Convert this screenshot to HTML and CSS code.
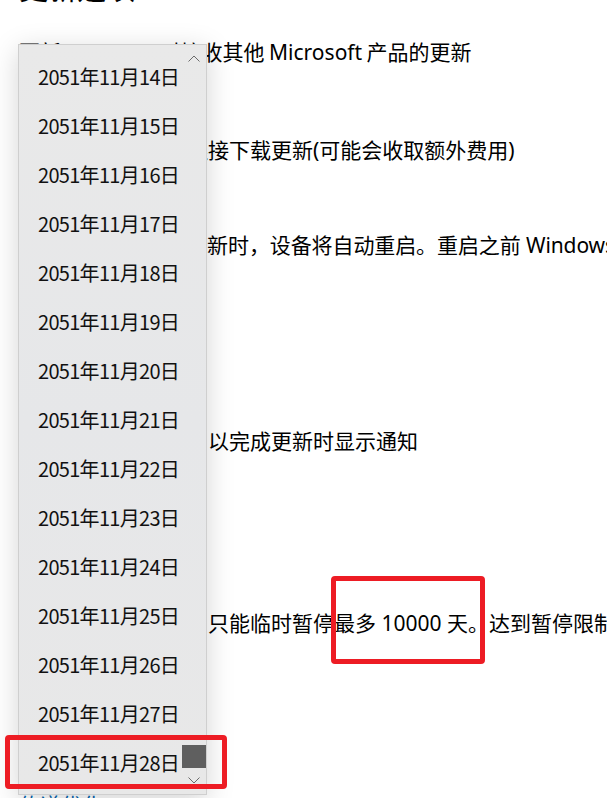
FILE: index.html
```html
<!DOCTYPE html>
<html lang="zh-CN">
<head>
<meta charset="utf-8">
<title>高级选项</title>
<link rel="stylesheet" href="styles.css">
</head>
<body>
<div class="page">
  <h2 class="heading">更新选项</h2>
  <p class="opt l1">更新 Windows 时接收其他 Microsoft 产品的更新</p>
  <p class="opt l2">通过按流量计费的连接下载更新(可能会收取额外费用)</p>
  <p class="opt l3">当需要重启以安装更新时，设备将自动重启。重启之前 Windows 将显示通知。</p>
  <p class="opt l4">当你的设备需要重启以完成更新时显示通知</p>
  <p class="opt l5">此设备暂停更新时，只能临时暂停最多 10000 天。达到暂停限制后，需要先获取新的更新。</p>
  <a class="link" href="#">传递优化</a>
</div>

<div class="dropdown">
  <svg class="chev chev-up" width="12" height="7" viewBox="0 0 12 7"><polyline points="0.5,6.5 6,1 11.5,6.5" fill="none" stroke="#6b6b6b" stroke-width="1"/></svg>
  <ul class="list">
    <li class="item">2051年11月14日</li>
    <li class="item">2051年11月15日</li>
    <li class="item">2051年11月16日</li>
    <li class="item">2051年11月17日</li>
    <li class="item">2051年11月18日</li>
    <li class="item">2051年11月19日</li>
    <li class="item">2051年11月20日</li>
    <li class="item">2051年11月21日</li>
    <li class="item">2051年11月22日</li>
    <li class="item">2051年11月23日</li>
    <li class="item">2051年11月24日</li>
    <li class="item">2051年11月25日</li>
    <li class="item">2051年11月26日</li>
    <li class="item">2051年11月27日</li>
    <li class="item">2051年11月28日</li>
  </ul>
  <svg class="chev chev-down" width="12" height="7" viewBox="0 0 12 7"><polyline points="0.5,0.5 6,6 11.5,0.5" fill="none" stroke="#6b6b6b" stroke-width="1"/></svg>
  <div class="thumb"></div>
</div>

<div class="mark mark-item"></div>
<div class="mark mark-text"></div>
</body>
</html>
```

FILE: styles.css
```css
html, body {
  margin: 0;
  padding: 0;
  background: #ffffff;
  overflow: hidden;
}
body {
  font-family: "Noto Sans", "Noto Sans CJK SC", sans-serif;
  color: #000000;
  position: relative;
  width: 607px;
  height: 798px;
}
.page {
  padding-left: 19px;
  white-space: nowrap;
}
.heading {
  font-family: "Noto Sans", "Noto Sans CJK SC", sans-serif;
  font-size: 29px;
  font-weight: 400;
  line-height: 36px;
  margin: -29px 0 0;
}
.opt {
  font-size: 21px;
  line-height: 28px;
  margin: 0;
}
.l1 { margin-top: 31px; word-spacing: -1px; }
.l2 { margin-top: 70px; }
.l3 { margin-top: 67px; letter-spacing: -0.1px; }
.l4 { margin-top: 168px; }
.l5 { margin-top: 154px; }
.link {
  display: block;
  margin-top: 154px;
  font-size: 21px;
  line-height: 28px;
  color: #0063b1;
  text-decoration: none;
}

.dropdown {
  position: absolute;
  left: 18px;
  top: 44px;
  width: 189px;
  height: 751px;
  box-sizing: border-box;
  padding: 7px 0 8px;
  background: linear-gradient(180deg, #e9e9e9 0%, #e6e7e9 50%, #e8e8e8 100%);
  border: 1px solid #cfcfcf;
  box-shadow: 0 6px 26px rgba(0, 0, 0, 0.17);
}
.list {
  list-style: none;
  margin: 0;
  padding: 0;
}
.item {
  height: 49px;
  display: flex;
  align-items: center;
  padding-left: 19px;
  font-family: "Noto Sans CJK SC", sans-serif;
  font-size: 20px;
  letter-spacing: -0.7px;
  color: #111111;
}
.chev {
  position: absolute;
  right: 6px;
  display: block;
}
.chev-up { top: 10px; }
.chev-down { bottom: 10px; }
.thumb {
  position: absolute;
  left: 163px;
  top: 700px;
  width: 24px;
  height: 23px;
  background: #5f5f5f;
}

.mark {
  position: absolute;
  box-sizing: border-box;
  border: 5px solid #ed1c24;
  border-radius: 4px;
}
.mark-item {
  left: 5px;
  top: 735px;
  width: 222px;
  height: 54px;
}
.mark-text {
  left: 331px;
  top: 576px;
  width: 154px;
  height: 88px;
}
```
